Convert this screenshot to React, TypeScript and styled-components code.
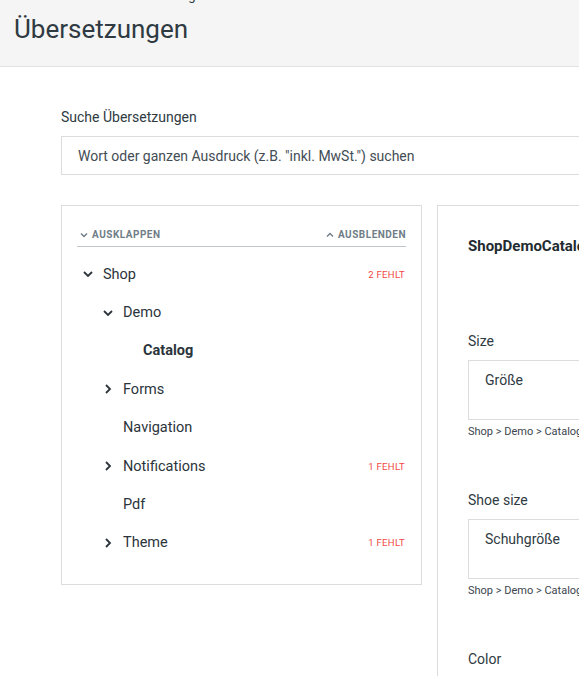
import styled, { createGlobalStyle } from 'styled-components'

const GlobalStyle = createGlobalStyle`
  html, body {
    margin: 0;
    padding: 0;
    background: #fff;
    height: 100%;
    overflow: hidden;
  }
  body {
    font-family: Roboto, "Liberation Sans", sans-serif;
    color: #2f3a42;
  }
`

const Header = styled.header`
  height: 67px;
  background: #f5f5f5;
  border-bottom: 1px solid #e2e2e2;
  padding: 0 14px;
  box-sizing: border-box;
  overflow: hidden;
`

const Crumb = styled.div`
  font-size: 13px;
  line-height: 14px;
  margin-top: -11px;
  padding-left: 118px;
  color: #2f3a42;
`

const Title = styled.h1`
  margin: 10px 0 0;
  font-size: 26px;
  font-weight: 400;
  line-height: 32px;
  color: #2f3a42;
`

const Main = styled.main`
  padding: 41px 0 0 61px;
  width: 900px;
`

const SearchLabel = styled.label`
  display: block;
  font-size: 14px;
  line-height: 18px;
  margin-bottom: 10px;
  color: #2f3a42;
`

const SearchBox = styled.div`
  height: 39px;
  border: 1px solid #dcdcdc;
  box-sizing: border-box;
  display: flex;
  align-items: center;
  padding-left: 16px;
  font-size: 14px;
  color: #434d55;
`

const Columns = styled.div`
  display: grid;
  grid-template-columns: 361px 1fr;
  gap: 15px;
  margin-top: 30px;
`

const Panel = styled.section`
  border: 1px solid #dcdcdc;
  box-sizing: border-box;
`

const TreePanel = styled(Panel)`
  height: 380px;
  padding: 17px 15px 0;
`

const Toolbar = styled.div`
  display: flex;
  justify-content: space-between;
  align-items: center;
  height: 23px;
  border-bottom: 1px solid #bfc7cc;
  margin-bottom: 8px;
`

const ToolButton = styled.span`
  display: flex;
  align-items: center;
  gap: 4px;
  padding-left: 3px;
  font-size: 10px;
  font-weight: 700;
  letter-spacing: 0.5px;
  color: #6f7d87;
  text-transform: uppercase;
`

const Row = styled.div<{ $level: number }>`
  display: flex;
  align-items: center;
  height: 38.4px;
  padding-left: ${({ $level }) => 5 + $level * 20}px;
`

const Toggle = styled.span`
  width: 21px;
  display: flex;
  align-items: center;
`

const Label = styled.span<{ $active?: boolean }>`
  flex: 1;
  font-size: 14.5px;
  font-weight: ${({ $active }) => ($active ? 700 : 400)};
  color: #2b343b;
`

const Missing = styled.span`
  font-size: 9.5px;
  letter-spacing: 0.3px;
  color: #f2463f;
  margin-right: 1px;
`

const DetailPanel = styled(Panel)`
  height: 480px;
  padding: 30px 30px 0;
  overflow: hidden;
`

const DetailTitle = styled.h2`
  margin: 0 0 76px;
  font-size: 15px;
  font-weight: 700;
  line-height: 20px;
  color: #232b31;
`

const Field = styled.div`
  margin-bottom: 52px;
`

const FieldLabel = styled.div`
  font-size: 14px;
  line-height: 18px;
  color: #2f3a42;
  margin-bottom: 10px;
`

const TextArea = styled.div`
  height: 60px;
  border: 1px solid #dcdcdc;
  box-sizing: border-box;
  padding: 10px 16px;
  font-size: 14px;
  line-height: 18px;
  color: #2f3a42;
`

const Path = styled.div`
  font-size: 11px;
  line-height: 14px;
  margin-top: 5px;
  color: #3b454d;
`

const Chevron = ({ dir }: { dir: 'down' | 'right' }) => (
  <svg width="12" height="12" viewBox="0 0 12 12">
    <path
      d={dir === 'down' ? 'M2 4 L6 8 L10 4' : 'M4 2 L8 6 L4 10'}
      fill="none"
      stroke="#2b343b"
      strokeWidth="1.8"
    />
  </svg>
)

const Small = ({ up }: { up?: boolean }) => (
  <svg width="8" height="8" viewBox="0 0 8 8">
    <path d={up ? 'M1 5.5 L4 2.5 L7 5.5' : 'M1 2.5 L4 5.5 L7 2.5'} fill="none" stroke="#6f7d87" strokeWidth="1.4" />
  </svg>
)

type Node = { name: string; level: number; open?: boolean; leaf?: boolean; active?: boolean; missing?: number }

const tree: Node[] = [
  { name: 'Shop', level: 0, open: true, missing: 2 },
  { name: 'Demo', level: 1, open: true },
  { name: 'Catalog', level: 2, leaf: true, active: true },
  { name: 'Forms', level: 1 },
  { name: 'Navigation', level: 1, leaf: true },
  { name: 'Notifications', level: 1, missing: 1 },
  { name: 'Pdf', level: 1, leaf: true },
  { name: 'Theme', level: 1, missing: 1 },
]

const fields = [
  { label: 'Size', value: 'Größe' },
  { label: 'Shoe size', value: 'Schuhgröße' },
  { label: 'Color', value: 'Farbe' },
]

export default function App() {
  return (
    <>
      <GlobalStyle />
      <Header>
        <Crumb>Einstellungen</Crumb>
        <Title>Übersetzungen</Title>
      </Header>
      <Main>
        <SearchLabel>Suche Übersetzungen</SearchLabel>
        <SearchBox>Wort oder ganzen Ausdruck (z.B. "inkl. MwSt.") suchen</SearchBox>
        <Columns>
          <TreePanel>
            <Toolbar>
              <ToolButton><Small />Ausklappen</ToolButton>
              <ToolButton><Small up />Ausblenden</ToolButton>
            </Toolbar>
            {tree.map((n) => (
              <Row key={n.name} $level={n.level}>
                <Toggle>{!n.leaf && <Chevron dir={n.open ? 'down' : 'right'} />}</Toggle>
                <Label $active={n.active}>{n.name}</Label>
                {n.missing && <Missing>{n.missing} FEHLT</Missing>}
              </Row>
            ))}
          </TreePanel>
          <DetailPanel>
            <DetailTitle>ShopDemoCatalog</DetailTitle>
            {fields.map((f) => (
              <Field key={f.label}>
                <FieldLabel>{f.label}</FieldLabel>
                <TextArea>{f.value}</TextArea>
                <Path>Shop &gt; Demo &gt; Catalog</Path>
              </Field>
            ))}
          </DetailPanel>
        </Columns>
      </Main>
    </>
  )
}
